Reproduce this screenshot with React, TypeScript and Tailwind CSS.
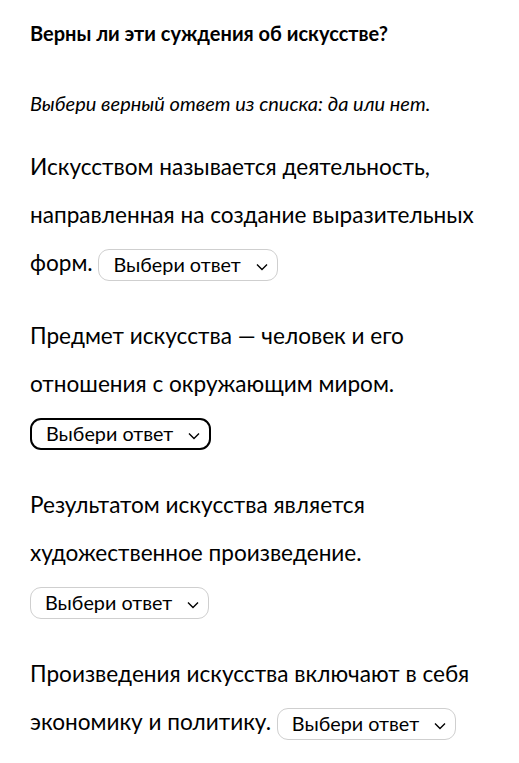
function Select({ active = false }: { active?: boolean }) {
  return (
    <span
      className={`inline-flex items-center align-middle h-[32px] pl-[14px] pr-[9px] rounded-[11px] bg-white text-[19.8px] leading-none text-black ${
        active ? 'border-2 border-black' : 'border border-[#cfcfcf]'
      }`}
    >
      <span>Выбери ответ</span>
      <svg width="12" height="8" viewBox="0 0 12 8" className="ml-[15px] mt-[3px]" fill="none" stroke="currentColor" strokeWidth="1.4">
        <polyline points="1,1.5 6,6.5 11,1.5" />
      </svg>
    </span>
  );
}

export default function App() {
  return (
    <div className="min-h-screen bg-white text-black pl-[30px] pr-[20px] pt-[21px]" style={{ fontFamily: 'Lato, sans-serif' }}>
      <h1 className="text-[20px] font-bold leading-[24px]">Верны ли эти суждения об искусстве?</h1>
      <p className="mt-[46px] text-[20px] italic leading-[24px]">Выбери верный ответ из списка: да или нет.</p>

      <p className="mt-[28px] text-[22.6px] leading-[48px]">
        Искусством называется деятельность, направленная на создание выразительных форм. <Select />
      </p>
      <p className="mt-[25px] text-[22.6px] leading-[48px]">
        Предмет искусства — человек и его отношения с окружающим миром. <Select active />
      </p>
      <p className="mt-[25px] text-[22.6px] leading-[48px]">
        Результатом искусства является художественное произведение. <Select />
      </p>
      <p className="mt-[25px] text-[22.6px] leading-[48px]">
        Произведения искусства включают в себя экономику и политику. <Select />
      </p>
    </div>
  );
}
